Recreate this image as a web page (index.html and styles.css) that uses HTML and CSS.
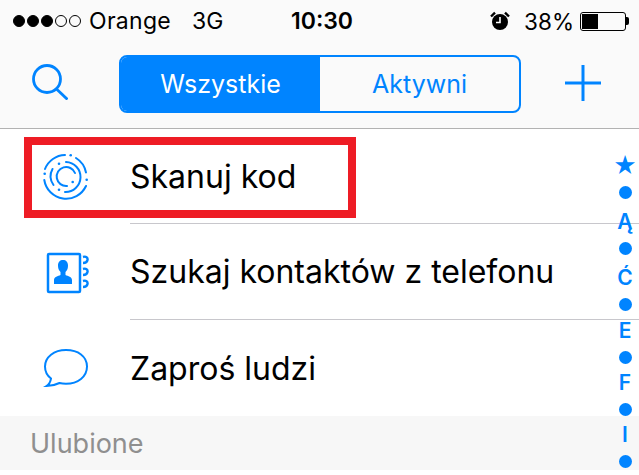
FILE: index.html
```html
<!DOCTYPE html>
<html lang="pl">
<head>
    <meta charset="UTF-8">
    <meta name="viewport" content="width=device-width, initial-scale=1.0">
    <title>Kontakty</title>
    <link rel="stylesheet" href="styles.css">
</head>
<body>
    <div class="top">
        <div class="status">
            <div class="status-left">
                <div class="signal">
                    <span class="dot full"></span><span class="dot full"></span><span class="dot full"></span><span class="dot"></span><span class="dot"></span>
                </div>
                <span class="carrier">Orange</span>
                <span class="net">3G</span>
            </div>
            <div class="clock">10:30</div>
            <div class="status-right">
                <svg class="alarm" width="20" height="20" viewBox="0 0 20 20">
                    <circle cx="10" cy="11" r="8" fill="#000"/>
                    <path d="M10 6v5.500H6" fill="none" stroke="#fff" stroke-width="1.600"/>
                    <path d="M1 5.500 5 1.600M19 5.500 15 1.600" stroke="#000" stroke-width="2.400"/>
                </svg>
                <span class="percent">38%</span>
                <div class="battery"><div class="battery-level"></div></div>
                <div class="battery-tip"></div>
            </div>
        </div>
        <div class="nav">
            <svg class="search" width="36" height="36" viewBox="0 0 36 36">
                <circle cx="15" cy="15" r="13.500" fill="none" stroke="#0084ff" stroke-width="2.800"/>
                <path d="M24.500 25 35.500 35.500" fill="none" stroke="#0084ff" stroke-width="2.800"/>
            </svg>
            <div class="tabs">
                <div class="tab active">Wszystkie</div>
                <div class="tab">Aktywni</div>
            </div>
            <svg class="plus" width="36" height="36" viewBox="0 0 36 36">
                <path d="M18 0v36M0 18h36" stroke="#0084ff" stroke-width="3"/>
            </svg>
        </div>
    </div>

    <div class="list">
        <div class="row">
            <svg class="row-icon" width="46" height="46" viewBox="0 0 46 46" fill="none" stroke="#0084ff" stroke-width="2" stroke-linecap="round">
                <path d="M2 15A22 22 0 0 1 22 1M33 4A22 22 0 0 1 43 18.500M43 32A22 22 0 0 1 1.300 26"/>
                <path d="M23 8A15 15 0 0 1 22 38M9.500 15A15 15 0 0 0 10.500 31"/>
                <path d="M32 19A9.500 9.500 0 1 0 24 32"/>
                <circle cx="27.700" cy="1.300" r="1.300" fill="#0084ff" stroke="none"/>
                <circle cx="43.700" cy="25.700" r="1.300" fill="#0084ff" stroke="none"/>
                <circle cx="1.700" cy="19.700" r="1.300" fill="#0084ff" stroke="none"/>
                <circle cx="16" cy="9.700" r="1.300" fill="#0084ff" stroke="none"/>
                <circle cx="16" cy="35.700" r="1.300" fill="#0084ff" stroke="none"/>
                <circle cx="29.700" cy="28" r="1.300" fill="#0084ff" stroke="none"/>
            </svg>
            <div class="row-text">Skanuj kod</div>
        </div>
        <div class="row middle">
            <svg class="row-icon" width="46" height="46" viewBox="0 0 46 46" fill="none">
                <rect x="5" y="5" width="32" height="38" rx="1" stroke="#0084ff" stroke-width="2.500"/>
                <path d="M11 35v-4c0-3 4-4 6.500-5v-3c-2-2-2.500-4-2.500-6.500 0-3.500 2-5.500 5-5.500s5 2 5 5.500c0 2.500-.5 4.500-2.500 6.500v3c2.500 1 6.500 2 6.500 5v4z" fill="#0084ff"/>
                <path d="M40 8c3-1 5 .5 4.500 3s-2.500 3-4.500 3M40 20c3-1 5 .5 4.500 3s-2.500 3-4.500 3M40 32c3-1 5 .5 4.500 3s-2.500 3-4.500 3" stroke="#0084ff" stroke-width="2.400"/>
            </svg>
            <div class="row-text">Szukaj kontaktów z telefonu</div>
        </div>
        <div class="row last">
            <svg class="row-icon" width="46" height="46" viewBox="0 0 46 46" fill="none">
                <path d="M23 5C11 5 2 12 2 21.500c0 5 2 9 6 12-.5 3-2 6-4.500 7.500 4 0 9-1 13-3 2 .5 4 .7 6.500.7 12 0 21-7 21-17.200S35 5 23 5z" stroke="#0084ff" stroke-width="2"/>
            </svg>
            <div class="row-text">Zaproś ludzi</div>
        </div>
        <div class="section">Ulubione</div>
    </div>

    <div class="red-box"></div>

    <div class="index">
        <span class="index-star">★</span>
        <span class="index-dot"></span>
        <span class="accent">Ą</span>
        <span class="index-dot"></span>
        <span class="accent">Ć</span>
        <span class="index-dot"></span>
        <span class="index-e">E</span>
        <span class="index-dot"></span>
        <span>F</span>
        <span class="index-dot"></span>
        <span>I</span>
        <span class="index-dot"></span>
    </div>
</body>
</html>
```

FILE: styles.css
```css
html, body {
    margin: 0;
    padding: 0;
}
body {
    position: relative;
    width: 639px;
    height: 475px;
    overflow: hidden;
    background-color: #fff;
    font-family: Inter, "Liberation Sans", sans-serif;
    color: #000;
}
.top {
    height: 128px;
    background-color: #fafafa;
    border-bottom: 1px solid #b2b2b2;
}
.status {
    height: 42px;
    display: flex;
    align-items: center;
    padding: 0 10px 0 13px;
    font-size: 23px;
}
.status-left {
    width: 278px;
    display: flex;
    align-items: center;
}
.signal {
    display: flex;
    gap: 2px;
}
.dot {
    width: 10px;
    height: 10px;
    border: 1px solid #000;
    border-radius: 50%;
}
.dot.full {
    background-color: #000;
}
.carrier {
    margin-left: 8px;
    letter-spacing: .3px;
}
.net {
    margin-left: 21px;
}
.clock {
    font-weight: 600;
}
.status-right {
    margin-left: auto;
    display: flex;
    align-items: center;
}
.percent {
    margin-left: 14px;
    margin-right: 6px;
    font-size: 22.500px;
}
.battery {
    width: 46px;
    height: 19px;
    padding: 1px;
    box-sizing: border-box;
    border: 1px solid #000;
    border-radius: 3px;
}
.battery-level {
    width: 16px;
    height: 100%;
    background-color: #000;
}
.battery-tip {
    width: 3px;
    height: 8px;
    background-color: #000;
    border-radius: 0 2px 2px 0;
}
.nav {
    height: 86px;
    display: flex;
    align-items: flex-start;
    padding: 13px 0 0 32px;
    box-sizing: border-box;
}
.search {
    margin-top: 9px;
}
.tabs {
    width: 398px;
    height: 54px;
    margin-left: 51px;
    display: flex;
    border: 2px solid #0084ff;
    border-radius: 8px;
    overflow: hidden;
}
.tab {
    flex: 1;
    display: flex;
    align-items: center;
    justify-content: center;
    font-size: 25px;
    color: #0084ff;
}
.tab.active {
    background-color: #0084ff;
    color: #fff;
}
.plus {
    margin: 10px 0 0 44px;
}
.row {
    height: 95px;
    display: flex;
    align-items: center;
    padding-left: 43px;
}
.row-icon {
    flex: none;
}
.row-text {
    flex: 1;
    align-self: stretch;
    display: flex;
    align-items: center;
    margin-left: 41px;
    font-size: 32px;
    border-bottom: 1px solid #c8c7cc;
}
.row.middle {
    height: 96px;
}
.row.last {
    height: 96px;
}
.row.last .row-text {
    border-bottom: none;
}
.section {
    height: 54px;
    display: flex;
    align-items: center;
    padding-left: 30px;
    background-color: #f7f7f7;
    font-size: 27px;
    color: #8f8f8f;
}
.red-box {
    position: absolute;
    left: 24px;
    top: 137px;
    width: 316px;
    height: 65px;
    border: 8px solid #ee1c25;
}
.index {
    position: absolute;
    top: 154px;
    right: 0;
    width: 28px;
    display: flex;
    flex-direction: column;
    align-items: center;
    color: #0084ff;
    font-size: 21px;
    font-weight: 600;
}
.index span {
    height: 26px;
    line-height: 26px;
}
.index .index-star {
    height: 25px;
    line-height: 25px;
    font-size: 23px;
}
.index .accent {
    margin-top: 4px;
}
.index .index-e {
    margin-top: 1px;
}
.index .index-dot {
    width: 13px;
    height: 13px;
    margin: 6.500px 0;
    background-color: #0084ff;
    border-radius: 50%;
}
```
